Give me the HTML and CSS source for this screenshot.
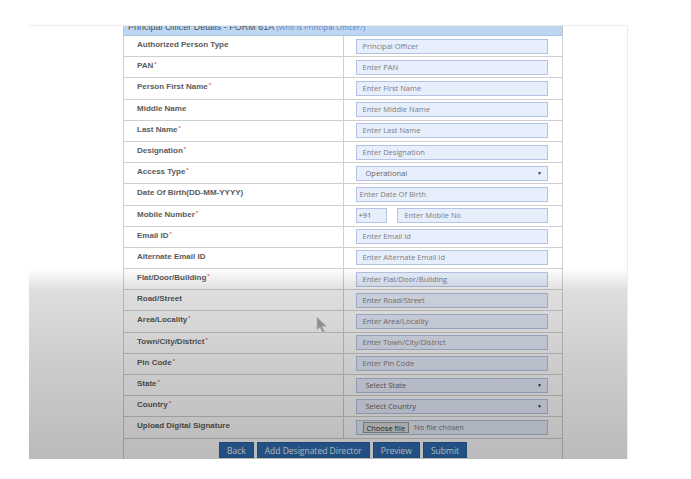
FILE: index.html
```html
<!DOCTYPE html>
<html>

<head>
    <title>
        Principal Officer Details
    </title>
    <link rel="stylesheet" href="styles.css">
</head>

<body>
    <div class="screen">
        <table class="form-table">
            <thead>
                <tr>
                    <th colspan="2">Principal Officer Details - FORM 61A <span class="help">(Who is Principal Officer?)</span></th>
                </tr>
            </thead>
            <tbody>
                <tr>
                    <td class="label">Authorized Person Type</td>
                    <td class="field"><div class="box">Principal Officer</div></td>
                </tr>
                <tr>
                    <td class="label">PAN<span class="req">*</span></td>
                    <td class="field"><div class="box">Enter PAN</div></td>
                </tr>
                <tr>
                    <td class="label">Person First Name<span class="req">*</span></td>
                    <td class="field"><div class="box">Enter First Name</div></td>
                </tr>
                <tr>
                    <td class="label">Middle Name</td>
                    <td class="field"><div class="box">Enter Middle Name</div></td>
                </tr>
                <tr>
                    <td class="label">Last Name<span class="req">*</span></td>
                    <td class="field"><div class="box">Enter Last Name</div></td>
                </tr>
                <tr>
                    <td class="label">Designation<span class="req">*</span></td>
                    <td class="field"><div class="box">Enter Designation</div></td>
                </tr>
                <tr>
                    <td class="label">Access Type<span class="req">*</span></td>
                    <td class="field"><div class="box select"><span>Operational</span><span class="arrow">&#9660;</span></div></td>
                </tr>
                <tr>
                    <td class="label">Date Of Birth(DD-MM-YYYY)</td>
                    <td class="field"><div class="box tight">Enter Date Of Birth</div></td>
                </tr>
                <tr>
                    <td class="label">Mobile Number<span class="req">*</span></td>
                    <td class="field">
                        <div class="mobile">
                            <div class="box code">+91</div>
                            <div class="box number">Enter Mobile No</div>
                        </div>
                    </td>
                </tr>
                <tr>
                    <td class="label">Email ID<span class="req">*</span></td>
                    <td class="field"><div class="box">Enter Email Id</div></td>
                </tr>
                <tr>
                    <td class="label">Alternate Email ID</td>
                    <td class="field"><div class="box">Enter Alternate Email Id</div></td>
                </tr>
                <tr>
                    <td class="label">Flat/Door/Building<span class="req">*</span></td>
                    <td class="field"><div class="box">Enter Flat/Door/Building</div></td>
                </tr>
                <tr>
                    <td class="label">Road/Street</td>
                    <td class="field"><div class="box">Enter Road/Street</div></td>
                </tr>
                <tr>
                    <td class="label">Area/Locality<span class="req">*</span></td>
                    <td class="field"><div class="box">Enter Area/Locality</div></td>
                </tr>
                <tr>
                    <td class="label">Town/City/District<span class="req">*</span></td>
                    <td class="field"><div class="box">Enter Town/City/District</div></td>
                </tr>
                <tr>
                    <td class="label">Pin Code<span class="req">*</span></td>
                    <td class="field"><div class="box">Enter Pin Code</div></td>
                </tr>
                <tr>
                    <td class="label">State<span class="req">*</span></td>
                    <td class="field"><div class="box select"><span>Select State</span><span class="arrow">&#9660;</span></div></td>
                </tr>
                <tr>
                    <td class="label">Country<span class="req">*</span></td>
                    <td class="field"><div class="box select"><span>Select Country</span><span class="arrow">&#9660;</span></div></td>
                </tr>
                <tr>
                    <td class="label">Upload Digital Signature</td>
                    <td class="field"><div class="box file"><span class="choose">Choose file</span><span>No file chosen</span></div></td>
                </tr>
                <tr>
                    <td colspan="2" class="actions">
                        <div class="buttons">
                            <span class="btn">Back</span>
                            <span class="btn">Add Designated Director</span>
                            <span class="btn">Preview</span>
                            <span class="btn">Submit</span>
                        </div>
                    </td>
                </tr>
            </tbody>
        </table>

        <svg class="cursor" width="12" height="18" viewBox="0 0 12 18">
            <path d="M1 1 L1 14 L4 11 L6.5 16.5 L8.5 15.6 L6 10.2 L10.5 10.2 Z" fill="#a9a9a9" stroke="#d9d9d9" stroke-width="0.8"/>
        </svg>
        <div class="shade"></div>
    </div>
</body>
</html>
```

FILE: styles.css
```css
body {
    margin: 0;
    background: #ffffff;
    font-family: "Open Sans", "Liberation Sans", sans-serif;
}

.screen {
    position: relative;
    margin: 25px 0 0 29px;
    width: 599px;
    height: 434px;
    overflow: hidden;
    background: #ffffff;
    border-top: 1px solid #ececec;
    box-sizing: border-box;
}

.form-table {
    border-collapse: collapse;
    table-layout: fixed;
    width: 440px;
    margin: -9px 0 0 94px;
    border: 1px solid #c4c4c4;
}

.form-table th {
    height: 18px;
    padding: 4px 0 0 4px;
    vertical-align: top;
    box-sizing: border-box;
    background-color: #bdd6f1;
    border-bottom: 1px solid #aac4e2;
    text-align: left;
    font-family: "Liberation Sans", sans-serif;
    font-size: 9px;
    line-height: 10px;
    font-weight: normal;
    color: #4d5666;
}

.form-table th .help {
    font-family: "Open Sans", sans-serif;
    font-size: 7.5px;
    color: #5b86c7;
}

.form-table td {
    border: 1px solid #cfcfcf;
    height: 21.2px;
    padding: 0;
    box-sizing: border-box;
}

td.label {
    width: 220px;
    vertical-align: top;
    padding: 4px 0 0 13px;
    font-family: "Liberation Sans", sans-serif;
    font-weight: bold;
    font-size: 8px;
    color: #5a5a5a;
}

.req {
    color: #e06a6a;
    font-size: 6px;
    vertical-align: 2px;
    margin-left: 1px;
}

td.field {
    vertical-align: middle;
    padding: 0 14px 0 12px;
}

.box {
    height: 15px;
    box-sizing: border-box;
    border: 1px solid #b4c3e3;
    background: #e7eefc;
    padding: 0 6px;
    font-size: 7.5px;
    line-height: 13px;
    color: #7d7d7d;
    white-space: nowrap;
    overflow: hidden;
}

.box.tight {
    padding-left: 3px;
}

.box.select {
    display: flex;
    justify-content: space-between;
    padding: 0 5px 0 9px;
    color: #666666;
}

.arrow {
    font-size: 5px;
    color: #333333;
}

.mobile {
    display: flex;
    gap: 10px;
}

.box.code {
    width: 31px;
    padding-left: 2px;
    color: #666666;
}

.box.number {
    flex: 1;
    padding-left: 7px;
}

.box.file {
    display: flex;
    align-items: center;
    gap: 5px;
    padding-left: 6px;
    color: #777777;
}

.choose {
    display: inline-block;
    height: 11px;
    line-height: 10px;
    padding: 0 3px;
    box-sizing: border-box;
    border: 1px solid #9a9a9a;
    background: #dedede;
    color: #333333;
}

td.actions {
    height: 24px;
    vertical-align: top;
    padding-top: 3px;
}

.buttons {
    display: flex;
    justify-content: center;
    gap: 3px;
}

.btn {
    height: 16px;
    line-height: 15px;
    padding: 0 7px;
    background: #2f6db3;
    color: #eef4fb;
    font-size: 8.5px;
    border: 1px solid #2a5e9c;
    box-sizing: border-box;
}

.cursor {
    position: absolute;
    left: 287px;
    top: 290px;
    filter: blur(0.5px);
}

.shade {
    position: absolute;
    left: 0;
    top: 0;
    right: 0;
    bottom: 0;
    pointer-events: none;
    border-right: 1px solid #ededed;
    background: linear-gradient(to bottom,
        rgba(0, 0, 0, 0) 0,
        rgba(0, 0, 0, 0) 242px,
        rgba(0, 0, 0, 0.13) 265px,
        rgba(0, 0, 0, 0.2) 340px,
        rgba(0, 0, 0, 0.27) 100%);
}
```
